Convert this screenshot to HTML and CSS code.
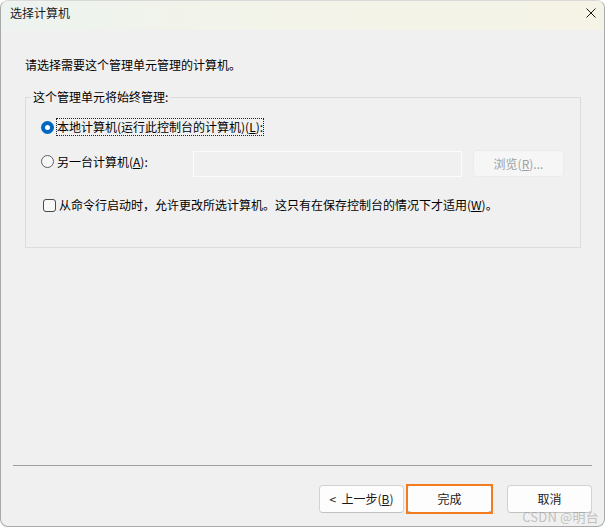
FILE: index.html
```
<!DOCTYPE html>
<html lang="zh-CN">
<head>
<meta charset="utf-8">
<title>选择计算机</title>
<link rel="stylesheet" href="styles.css">
</head>
<body>
<div class="window">
  <div class="titlebar">
    <span class="title">选择计算机</span>
    <svg class="close" width="10" height="10" viewBox="0 0 10 10"><path d="M0.5 0.5 L9.5 9.5 M9.5 0.5 L0.5 9.5" stroke="#1a1a1a" stroke-width="1" fill="none"/></svg>
  </div>
  <div class="content">
    <p class="intro">请选择需要这个管理单元管理的计算机。</p>
    <fieldset class="group">
      <legend>这个管理单元将始终管理:</legend>
      <div class="row row-local">
        <span class="radio checked"></span>
        <span class="label focused">本地计算机(运行此控制台的计算机)(<u>L</u>):</span>
      </div>
      <div class="row row-other">
        <span class="radio"></span>
        <span class="label other-label">另一台计算机(<u>A</u>):</span>
        <span class="textbox"></span>
        <span class="browse">浏览(<u>R</u>)...</span>
      </div>
      <div class="row row-check">
        <span class="checkbox"></span>
        <span class="label">从命令行启动时，允许更改所选计算机。这只有在保存控制台的情况下才适用(<u>W</u>)。</span>
      </div>
    </fieldset>
  </div>
  <div class="footer">
    <div class="separator"></div>
    <div class="buttons">
      <span class="btn">&lt;&nbsp; 上一步(<u>B</u>)</span>
      <span class="btn default">完成</span>
      <span class="btn cancel">取消</span>
    </div>
  </div>
  <div class="watermark">CSDN @明台</div>
</div>
</body>
</html>
```

FILE: styles.css
```
* { box-sizing: border-box; }
html, body { margin: 0; padding: 0; }
body {
  background: #ffffff;
  font-family: "Noto Sans CJK SC", "Noto Sans", sans-serif;
  font-size: 12px;
  color: #000;
}
.window {
  position: relative;
  width: 605px;
  height: 527px;
  border: 1px solid #a9a9a9;
  border-top-color: #d9d9d9;
  border-radius: 8px;
  overflow: hidden;
  background: #f0f0f0;
  display: flex;
  flex-direction: column;
}
.titlebar {
  height: 29px;
  flex: none;
  display: flex;
  justify-content: space-between;
  align-items: flex-start;
  padding: 4px 8px 0 9px;
  background: linear-gradient(90deg, #edf3f0 0%, #f2f3ea 35%, #f5f3e6 100%);
}
.title { line-height: 16px; color: #1a1a1a; }
.close { margin-top: 3px; display: block; }
.content { padding: 27px 23px 0 24px; }
.intro { margin: 0 0 16px; line-height: 16px; }
.group {
  margin: 0;
  padding: 13px 0 34px 0;
  border: 1px solid #dcdcdc;
  min-width: 0;
}
.group legend {
  margin-left: 5px;
  padding: 0 2px;
  line-height: 16px;
}
.row { display: flex; }
.label { line-height: 16px; white-space: nowrap; }
.row-local { height: 18px; align-items: center; padding-left: 15px; }
.row-local .radio { margin-right: 2px; margin-top: 1px; }
.focused { border: 1px dotted #222; padding: 0; }
.row-other { margin-top: 14px; padding-left: 15px; align-items: flex-start; }
.row-other .radio { margin-top: 5px; }
.other-label { margin-left: 3px; margin-top: 4px; width: 136px; }
.radio {
  flex: none;
  width: 13px;
  height: 13px;
  border-radius: 50%;
  border: 1px solid #5f5f5f;
  background: #f7f7f7;
  position: relative;
}
.radio.checked {
  border: none;
  background: #0067c0;
}
.radio.checked::after {
  content: "";
  position: absolute;
  left: 4px;
  top: 4px;
  width: 5px;
  height: 5px;
  border-radius: 50%;
  background: #ffffff;
}
.textbox {
  flex: none;
  width: 269px;
  height: 26px;
  margin-top: 1px;
  border: 1px solid #fbfbfb;
  background: #f0f0f0;
}
.browse {
  flex: none;
  width: 91px;
  height: 27px;
  margin-left: 11px;
  border: 1px solid #ebebeb;
  border-radius: 4px;
  background: #f6f6f6;
  color: #a0a0a0;
  display: flex;
  align-items: center;
  justify-content: center;
  line-height: 16px;
}
.row-check { margin-top: 20px; padding-left: 17px; align-items: center; }
.checkbox {
  flex: none;
  width: 13px;
  height: 13px;
  border: 1px solid #4a4a4a;
  border-radius: 3px;
  background: #f8f8f8;
  margin-right: 3px;
}
.footer { margin-top: auto; padding-bottom: 13px; }
.separator {
  height: 1px;
  margin: 0 12px;
  background: #a0a0a0;
}
.buttons {
  margin-top: 19px;
  display: flex;
  justify-content: flex-end;
  padding-right: 12px;
}
.btn {
  width: 85px;
  height: 28px;
  border: 1px solid #d3d3d3;
  border-bottom-color: #c2c2c2;
  border-radius: 4px;
  background: #fdfdfd;
  display: flex;
  align-items: center;
  justify-content: center;
  line-height: 14px;
  color: #1a1a1a;
}
.btn.default {
  position: relative;
  margin-left: 3px;
  border-color: #e2e2e2;
  border-bottom-color: #0067c0;
}
.btn.default::after {
  content: "";
  position: absolute;
  top: -2px;
  bottom: -2px;
  left: -2px;
  right: -2px;
  border: 2px solid #f47c20;
}
.btn.cancel { margin-left: 15px; }
.watermark {
  position: absolute;
  right: 5px;
  bottom: 3px;
  font-size: 13px;
  line-height: 13px;
  color: rgba(150, 150, 150, 0.55);
  letter-spacing: 0.2px;
}
```
